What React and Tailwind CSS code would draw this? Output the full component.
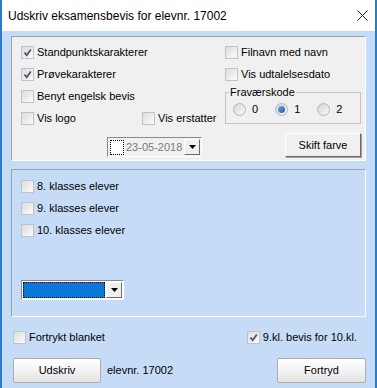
import React from "react";

const font = "font-['Liberation_Sans',Arial,sans-serif]";

function Box({ checked }) {
  return (
    <span className="flex h-[13px] w-[13px] shrink-0 items-center justify-center border border-[#c2c2c2] bg-gradient-to-br from-[#dcdcdc] to-[#fcfcfc]">
      {checked && (
        <svg width="11" height="11" viewBox="0 0 11 11">
          <path d="M2.5 5.5 L4.7 8.3 L8.8 2.5" fill="none" stroke="#4a5870" strokeWidth="1.8" />
        </svg>
      )}
    </span>
  );
}

function Check({ checked, label, className = "" }) {
  return (
    <div className={`flex h-[22px] items-center ${className}`}>
      <Box checked={checked} />
      <span className="ml-[3px] leading-none">{label}</span>
    </div>
  );
}

function Radio({ selected, label }) {
  return (
    <div className="flex items-center">
      <span className="flex h-[13px] w-[13px] items-center justify-center rounded-full border border-[#b4b4b4] bg-gradient-to-br from-[#d4d4d4] to-[#fafafa]">
        {selected && <span className="h-[7px] w-[7px] rounded-full bg-gradient-to-br from-[#6aa8e6] to-[#1d5ea8]" />}
      </span>
      <span className="ml-[6px] leading-none">{label}</span>
    </div>
  );
}

function DropArrow() {
  return (
    <span className="flex h-full w-[16px] shrink-0 items-center justify-center border border-t-white border-l-white border-r-[#6b6b6b] border-b-[#6b6b6b] bg-[#f0f0f0]">
      <svg width="7" height="4" viewBox="0 0 7 4">
        <path d="M0 0 H7 L3.5 4 Z" fill="#000" />
      </svg>
    </span>
  );
}

function WinButton({ children, className = "" }) {
  return (
    <button className={`flex items-center justify-center rounded-[2px] border border-[#adadad] bg-gradient-to-b from-[#ffffff] via-[#f3f3f3] to-[#e2e2e2] ${className}`}>
      {children}
    </button>
  );
}

export default function App() {
  return (
    <div className={`${font} h-[388px] w-[377px] border-x-2 border-[#2b7ad0] bg-[#c6dcf6] text-[11px] text-black`}>
      <div className="flex h-[31px] items-center justify-between bg-white pl-[6px] pr-[7px] text-[12px]">
        <span>Udskriv eksamensbevis for elevnr. 17002</span>
        <svg width="11" height="11" viewBox="0 0 11 11">
          <path d="M0.5 0.5 L10.5 10.5 M10.5 0.5 L0.5 10.5" stroke="#222" strokeWidth="1" />
        </svg>
      </div>

      <div className="px-[9px] pt-[5px]">
        <div className="flex h-[125px] border border-t-[#a0a0a0] border-l-[#a0a0a0] border-r-white border-b-white bg-[#f0f0f0] pl-[9px] pt-[4px]">
          <div className="w-[204px]">
            <Check checked label="Standpunktskarakterer" />
            <Check checked label="Prøvekarakterer" />
            <Check label="Benyt engelsk bevis" />
            <div className="flex">
              <Check label="Vis logo" className="w-[121px]" />
              <Check label="Vis erstatter" />
            </div>
            <div className="ml-[86px] mt-[8px] flex h-[20px] w-[95px] items-center border border-t-[#8a8a8a] border-l-[#8a8a8a] border-r-white border-b-white bg-[#f0f0f0] p-[1px]">
              <span className="ml-[1px] h-[15px] w-[14px] shrink-0 border border-dotted border-black bg-white" />
              <span className="ml-[2px] flex-1 whitespace-nowrap leading-none text-[#7a7a7a]">23-05-2018</span>
              <DropArrow />
            </div>
          </div>
          <div className="w-[136px]">
            <Check label="Filnavn med navn" />
            <Check label="Vis udtalelsesdato" />
            <fieldset className="h-[39px] border border-[#c4c4c4] px-[7px]">
              <legend className="-ml-[4px] px-[1px] leading-[14px]">Fraværskode</legend>
              <div className="flex h-[22px] items-center gap-[17px] -mt-[1px]">
                <Radio label="0" />
                <Radio selected label="1" />
                <Radio label="2" />
              </div>
            </fieldset>
            <button className="ml-[60px] mt-[9px] flex h-[24px] w-[76px] items-center justify-center border border-t-white border-l-white border-r-[#6b6b6b] border-b-[#6b6b6b] bg-[#f0f0f0] shadow-[1px_1px_0_#a0a0a0]">
              Skift farve
            </button>
          </div>
        </div>

        <div className="mt-[8px] h-[148px] border border-t-[#a0a0a0] border-l-[#a0a0a0] border-r-white border-b-white pl-[9px] pt-[5px]">
          <Check label="8. klasses elever" />
          <Check label="9. klasses elever" />
          <Check label="10. klasses elever" />
          <div className="mt-[39px] flex h-[20px] w-[103px] items-center border border-t-[#8a8a8a] border-l-[#8a8a8a] border-r-white border-b-white bg-white p-[1px]">
            <span className="h-full flex-1 border border-dotted border-black bg-[#0a78d6]" />
            <span className="ml-[1px] h-full">
              <DropArrow />
            </span>
          </div>
        </div>

        <div className="mt-[9px] flex items-center justify-between pl-[2px] pr-[9px]">
          <Check label="Fortrykt blanket" />
          <Check checked label="9.kl. bevis for 10.kl." />
        </div>

        <div className="mt-[10px] flex items-center pl-[2px]">
          <WinButton className="h-[25px] w-[88px]">Udskriv</WinButton>
          <span className="ml-[6px]">elevnr. 17002</span>
          <WinButton className="ml-auto h-[25px] w-[89px]">Fortryd</WinButton>
        </div>
      </div>
    </div>
  );
}
